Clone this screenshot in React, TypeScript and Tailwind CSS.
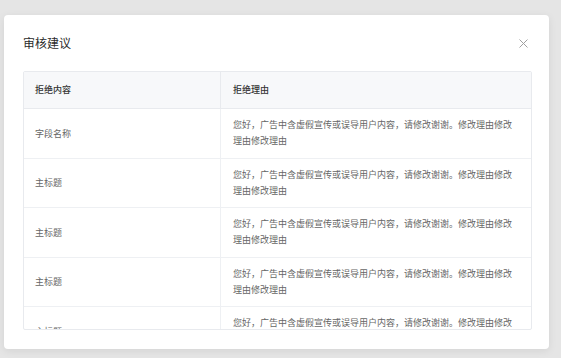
import React from "react";

const reason = "您好，广告中含虚假宣传或误导用户内容，请修改谢谢。修改理由修改理由修改理由";
const rows = ["字段名称", "主标题", "主标题", "主标题", "主标题", "主标题"];

export default function App() {
  return (
    <div
      className="w-[561px] h-[358px] bg-[#e5e5e5] pt-[15px] pl-[4px] overflow-hidden"
      style={{ fontFamily: '"Noto Sans CJK SC", "Noto Sans", sans-serif' }}
    >
      <div className="w-[545px] h-[334px] bg-white rounded-[4px] shadow-[0_2px_8px_rgba(0,0,0,0.08)] pl-[19px] pr-[17px] pt-[20px] flex flex-col">
        <div className="flex items-center justify-between h-[16px] mb-[20px]">
          <div className="text-[12px] leading-[16px] text-[#2b2b2b]">审核建议</div>
          <svg width="9" height="9" viewBox="0 0 9 9" className="mr-[4px]">
            <path d="M0.5 0.5 L8.5 8.5 M8.5 0.5 L0.5 8.5" stroke="#a0a0a0" strokeWidth="1" fill="none" />
          </svg>
        </div>
        <div className="w-[509px] h-[259px] border border-[#e8eaee] rounded-[2px] overflow-hidden flex flex-col shrink-0">
          <div className="flex h-[37px] shrink-0 bg-[#f7f8fa] border-b border-[#e8eaee] text-[9px] text-[#333] font-medium">
            <div className="w-[197px] shrink-0 border-r border-[#e8eaee] px-[11px] flex items-center">拒绝内容</div>
            <div className="flex-1 px-[12px] flex items-center">拒绝理由</div>
          </div>
          {rows.map((r, i) => (
            <div key={i} className="flex h-[49.5px] shrink-0 border-b border-[#eef0f3] text-[9px] text-[#666]">
              <div className="w-[197px] shrink-0 border-r border-[#eef0f3] px-[11px] flex items-center">{r}</div>
              <div className="flex-1 pl-[12px] pr-[12px] flex items-center leading-[16px]">{reason}</div>
            </div>
          ))}
        </div>
      </div>
    </div>
  );
}
